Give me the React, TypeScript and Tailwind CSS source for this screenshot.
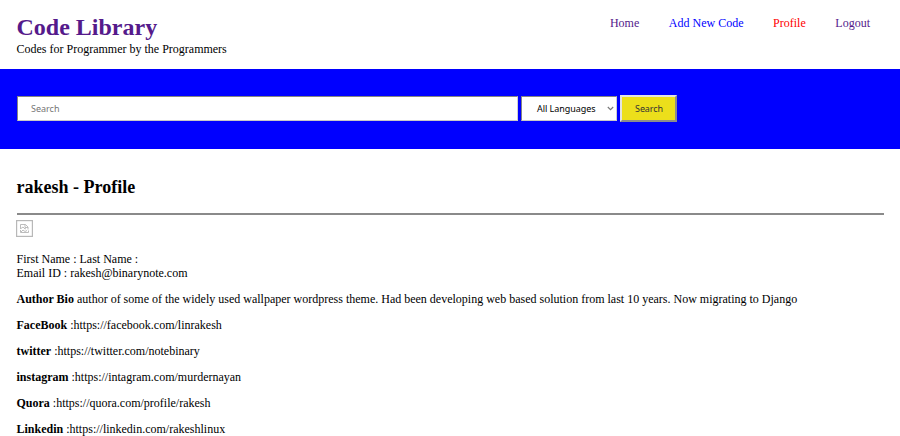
const navLinks = [
  { label: "Home", color: "text-[#551a8b]" },
  { label: "Add New Code", color: "text-[#0000ff]" },
  { label: "Profile", color: "text-[#ff0000]" },
  { label: "Logout", color: "text-[#551a8b]" },
];

const details = [
  {
    label: "Author Bio",
    value:
      "author of some of the widely used wallpaper wordpress theme. Had been developing web based solution from last 10 years. Now migrating to Django",
  },
  { label: "FaceBook", value: ":https://facebook.com/linrakesh" },
  { label: "twitter", value: ":https://twitter.com/notebinary" },
  { label: "instagram", value: ":https://intagram.com/murdernayan" },
  { label: "Quora", value: ":https://quora.com/profile/rakesh" },
  { label: "Linkedin", value: ":https://linkedin.com/rakeshlinux" },
];

function Header() {
  return (
    <header className="flex h-[69px] justify-between pl-[16.5px] pr-[30px]">
      <div className="pt-[13px]">
        <h1 className="text-[24px] leading-[29px] font-bold text-[#551a8b]">Code Library</h1>
        <p>Codes for Programmer by the Programmers</p>
      </div>
      <nav className="flex gap-[29.6px] pt-4">
        {navLinks.map((link) => (
          <a key={link.label} href="#" className={`h-[14px] ${link.color}`}>
            {link.label}
          </a>
        ))}
      </nav>
    </header>
  );
}

function SearchBar() {
  return (
    <form className="flex h-20 items-start bg-[#0000ff] pl-[17px] pt-[26px] font-['Noto_Sans',sans-serif] text-[9px] leading-[12px]">
      <input
        type="text"
        placeholder="Search"
        className="mt-px h-[25px] w-[501px] border border-[#858585] border-r-[#d0d0d0] border-b-[#c8c8c8] bg-white px-[13px] placeholder:text-[#757575]"
      />
      <div className="mt-px ml-[3px] flex h-[25px] w-[96px] items-center justify-between border border-[#858585] border-r-[#d0d0d0] border-b-[#c8c8c8] bg-white pl-[15px] pr-[2px] text-black">
        <span className="tracking-[-0.05px]">All Languages</span>
        <svg width="7" height="5" viewBox="0 0 7 5" fill="none" stroke="#777" strokeWidth="1.1">
          <path d="M0.8 1L3.5 3.7L6.2 1" />
        </svg>
      </div>
      <button
        type="button"
        className="ml-[3px] h-[27px] w-[57px] border-2 border-t-[#e3e3e3] border-r-[#8c8c8c] border-b-[#8c8c8c] border-l-[#e3e3e3] bg-[#ecdf1b] pl-px text-[#333] tracking-[-0.1px]"
      >
        Search
      </button>
    </form>
  );
}

function BrokenImage() {
  return (
    <svg className="-ml-[0.5px] mt-[5px] block" width="17" height="17" viewBox="0 0 17 17" fill="none">
      <rect x="0.6" y="0.6" width="15.8" height="15.8" stroke="#b8b8b8" strokeWidth="1.2" />
      <path d="M4.5 9V4.5H9.5L12 7V9.5M9 4.5V7.5H12M4.5 12.5H12.5V10.5M4.5 10V12.5M5 8.5L7 7L9 9L10 8.5M5 12L7 10L9 11.5L11 10.5" stroke="#b5b5b5" strokeWidth="0.9" />
    </svg>
  );
}

export default function App() {
  return (
    <div className="h-[436px] overflow-hidden bg-white font-['Liberation_Serif',serif] text-[12px] leading-[14px] text-black">
      <Header />
      <SearchBar />
      <main className="pl-[16.5px] pr-4 pt-[28px]">
        <h2 className="text-[18px] leading-[21px] font-bold">rakesh - Profile</h2>
        <hr className="mt-[15px] h-[2px] border-0 bg-[#8a8a8a]" />
        <BrokenImage />
        <div className="mt-[15px]">
          <p>First Name : Last Name :</p>
          <p>Email ID : rakesh@binarynote.com</p>
        </div>
        {details.map((detail) => (
          <p key={detail.label} className="mt-3 whitespace-nowrap">
            <b>{detail.label}</b> {detail.value}
          </p>
        ))}
      </main>
    </div>
  );
}
